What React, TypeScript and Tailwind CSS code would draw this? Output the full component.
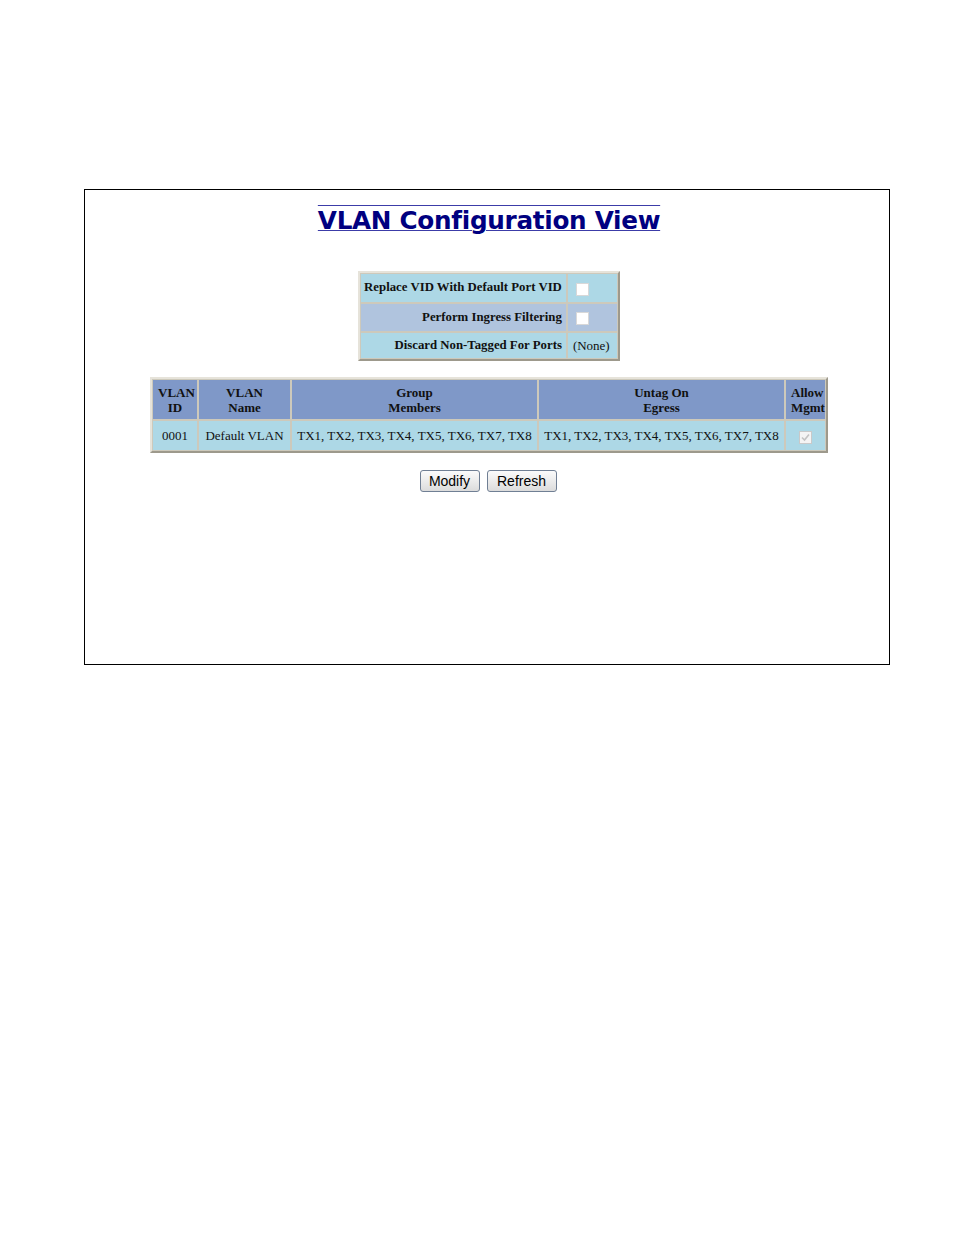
const serif = { fontFamily: '"Liberation Serif", "Times New Roman", serif' };

const Box = ({ checked = false }: { checked?: boolean }) => (
  <span
    className={`inline-flex h-[13px] w-[13px] items-center justify-center border ${
      checked ? "border-[#c9c9c9] bg-[#f4f4f4]" : "border-[#d8d8d8] bg-white"
    }`}
  >
    {checked && (
      <svg width="9" height="9" viewBox="0 0 9 9">
        <path d="M1 4.5 L3.5 7 L8 1.5" fill="none" stroke="#c2c2c2" strokeWidth="1.6" />
      </svg>
    )}
  </span>
);

const cell = "border border-[#cdc9bb] px-[5px]";

const App = () => {
  return (
    <div className="min-h-[1235px] w-[954px] bg-white pt-[189px] pl-[84px]" style={serif}>
      <div className="h-[476px] w-[806px] border border-black">
        {/* Title */}
        <div className="flex justify-center pt-[15px] pl-[4px]">
          <h1
            className="text-[24.7px] font-bold leading-[32px] text-[#000080] [text-decoration-line:underline_overline] decoration-[#3c3ca8] decoration-1"
            style={{ fontFamily: '"DejaVu Sans", Verdana, sans-serif', letterSpacing: "-0.3px" }}
          >
            VLAN Configuration View
          </h1>
        </div>

        {/* Port settings */}
        <div className="mt-[34px] flex justify-center pl-[4px]">
          <table className="border-separate border-spacing-0 border-2 border-t-[#e6e3da] border-l-[#e6e3da] border-b-[#9d998c] border-r-[#9d998c] text-[12.8px] font-bold text-[#111]">
            <tbody>
              <tr className="h-[30px] bg-[#add8e6]">
                <td className={`${cell} pl-[3px] pr-[4px] text-right`}>Replace VID With Default Port VID</td>
                <td className={`${cell} pl-[8px] pr-[28px]`}>
                  <div className="flex items-center pt-[2px]"><Box /></div>
                </td>
              </tr>
              <tr className="h-[29px] bg-[#b0c4de]">
                <td className={`${cell} pl-[3px] pr-[4px] text-right`}>Perform Ingress Filtering</td>
                <td className={`${cell} pl-[8px]`}>
                  <div className="flex items-center pt-[2px]"><Box /></div>
                </td>
              </tr>
              <tr className="h-[27px] bg-[#add8e6]">
                <td className={`${cell} pl-[3px] pr-[4px] text-right`}>Discard Non-Tagged For Ports</td>
                <td className={`${cell} text-[13px] font-normal`}>(None)</td>
              </tr>
            </tbody>
          </table>
        </div>

        {/* VLAN table */}
        <div className="mt-[16px] flex justify-center pl-[4px]">
          <table className="w-[678px] table-fixed border-separate border-spacing-0 border-2 border-t-[#e6e3da] border-l-[#e6e3da] border-b-[#9d998c] border-r-[#9d998c] text-center text-[13px] text-[#111]">
            <thead>
              <tr className="h-[41px] bg-[#7f98c8] font-bold leading-[15px]">
                <th className={`${cell} w-[46px] px-[2px]`}>VLAN<br />ID</th>
                <th className={`${cell} w-[93px] px-[2px]`}>VLAN<br />Name</th>
                <th className={`${cell} w-[247px] px-[2px]`}>Group<br />Members</th>
                <th className={`${cell} w-[247px] px-[2px]`}>Untag On<br />Egress</th>
                <th className={`${cell} w-[41px] px-[1px]`}>Allow<br />Mgmt</th>
              </tr>
            </thead>
            <tbody>
              <tr className="h-[31px] bg-[#add8e6]">
                <td className={`${cell} px-[2px]`}>0001</td>
                <td className={`${cell} whitespace-nowrap px-[2px]`}>Default VLAN</td>
                <td className={`${cell} whitespace-nowrap px-[2px]`}>TX1, TX2, TX3, TX4, TX5, TX6, TX7, TX8</td>
                <td className={`${cell} whitespace-nowrap px-[2px]`}>TX1, TX2, TX3, TX4, TX5, TX6, TX7, TX8</td>
                <td className={`${cell} px-[1px]`}>
                  <div className="flex justify-center pt-[3px]"><Box checked /></div>
                </td>
              </tr>
            </tbody>
          </table>
        </div>

        {/* Buttons */}
        <div
          className="mt-[17px] flex justify-center gap-[7px] pl-[2px] text-[14px] text-black"
          style={{ fontFamily: '"Liberation Sans", Arial, sans-serif' }}
        >
          <button className="h-[22px] w-[60px] rounded-[3px] border border-[#707f94] bg-gradient-to-b from-[#fbfbfb] to-[#dcdcdc] leading-[20px]">
            Modify
          </button>
          <button className="h-[22px] w-[70px] rounded-[3px] border border-[#707f94] bg-gradient-to-b from-[#fbfbfb] to-[#dcdcdc] leading-[20px]">
            Refresh
          </button>
        </div>
      </div>
    </div>
  );
};

export default App;
